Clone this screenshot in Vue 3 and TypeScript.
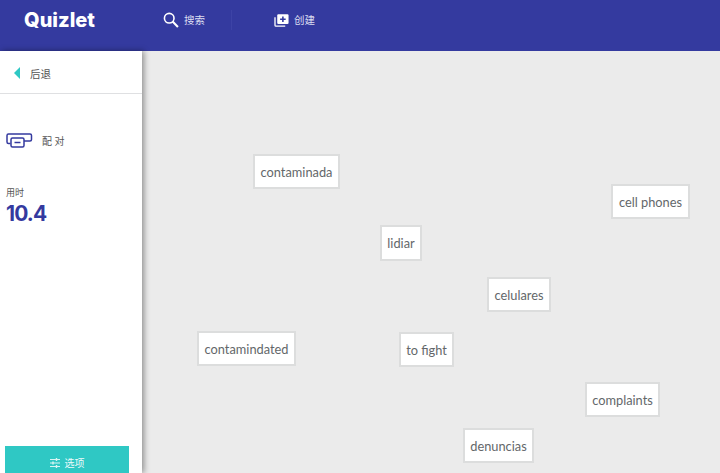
<template>
  <div class="page">
    <!-- 顶部导航 -->
    <header class="topbar">
      <div class="logo">Quizlet</div>
      <nav class="nav">
        <a class="nav-item nav-search">
          <svg class="nav-icon" viewBox="0 0 18 18" width="16" height="16">
            <circle cx="7" cy="7" r="5.4" fill="none" stroke="#fff" stroke-width="1.8" />
            <path d="M10.8 10.8 L16.8 16.8" stroke="#fff" stroke-width="2.4" fill="none" />
          </svg>
          <span>搜索</span>
        </a>
        <span class="nav-sep"></span>
        <a class="nav-item">
          <svg class="nav-icon" viewBox="0 0 16 14" width="15" height="13">
            <path d="M1 3.5 V12 a1 1 0 0 0 1 1 H12" fill="none" stroke="#fff" stroke-width="1.4" />
            <rect x="3.4" y="0.4" width="12.2" height="10.4" rx="1.2" fill="#fff" />
            <path d="M9.5 2.6 V8.6 M6.5 5.6 H12.5" stroke="#343a9f" stroke-width="1.7" />
          </svg>
          <span>创建</span>
        </a>
      </nav>
    </header>

    <div class="body">
      <!-- 侧边栏 -->
      <aside class="sidebar">
        <div class="back">
          <span class="back-arrow"></span>
          <span>后退</span>
        </div>
        <div class="mode">
          <svg viewBox="0 0 27 15" width="27" height="15">
            <path d="M4.5 10.5 H2.5 a1.5 1.5 0 0 1 -1.5 -1.5 V2.5 a1.5 1.5 0 0 1 1.5 -1.5 H24 a1.5 1.5 0 0 1 1.5 1.5 V6.5 a1.5 1.5 0 0 1 -1.5 1.5 H18" fill="none" stroke="#343a9f" stroke-width="1.5" />
            <rect x="5" y="5" width="13" height="9" rx="1.5" fill="#fff" stroke="#343a9f" stroke-width="1.5" />
            <path d="M8.5 9.5 H14.5" stroke="#343a9f" stroke-width="1.5" />
          </svg>
          <span class="mode-label">配 对</span>
        </div>
        <div class="timer">
          <div class="timer-label">用时</div>
          <div class="timer-value">{{ elapsed }}</div>
        </div>
        <button class="options">
          <svg viewBox="0 0 10 10" width="10" height="10">
            <path d="M0 1.5 H10 M0 5 H10 M0 8.5 H10" stroke="#d9f5f3" stroke-width="1.1" />
            <path d="M6.5 0 V3 M3 3.5 V6.5 M6.5 7 V10" stroke="#d9f5f3" stroke-width="1.4" />
          </svg>
          <span>选项</span>
        </button>
      </aside>

      <!-- 配对画布 -->
      <main class="board">
        <div
          v-for="card in cards"
          :key="card.text"
          class="card"
          :style="{ left: card.x + 'px', top: card.y + 'px', width: card.w + 'px', height: card.h + 'px' }"
        >
          {{ card.text }}
        </div>
      </main>
    </div>
  </div>
</template>

<script setup lang="ts">
interface MatchCard {
  text: string
  x: number
  y: number
  w: number
  h: number
}

const elapsed = '10.4'

const cards: MatchCard[] = [
  { text: 'contaminada', x: 111, y: 103, w: 87, h: 35 },
  { text: 'lidiar', x: 238, y: 174, w: 42, h: 36 },
  { text: 'cell phones', x: 469, y: 133, w: 79, h: 35 },
  { text: 'celulares', x: 345, y: 226, w: 64, h: 35 },
  { text: 'contamindated', x: 55, y: 280, w: 99, h: 35 },
  { text: 'to fight', x: 257, y: 281, w: 55, h: 35 },
  { text: 'complaints', x: 443, y: 331, w: 75, h: 35 },
  { text: 'denuncias', x: 321, y: 377, w: 71, h: 35 }
]
</script>

<style scoped>
.page {
  width: 720px;
  height: 473px;
  display: flex;
  flex-direction: column;
  overflow: hidden;
  font-family: "Lato", "Noto Sans CJK SC", sans-serif;
}

.topbar {
  height: 51px;
  flex-shrink: 0;
  display: flex;
  align-items: flex-start;
  background-color: #343a9f;
  color: #fff;
}

.logo {
  width: 163px;
  padding: 8px 0 0 24px;
  box-sizing: border-box;
  font-family: "Inter", sans-serif;
  font-size: 20px;
  line-height: 25px;
  font-weight: 800;
}

.nav {
  display: flex;
  align-items: center;
  padding-top: 10px;
}

.nav-item {
  display: flex;
  align-items: center;
  gap: 5px;
  font-size: 10.5px;
  line-height: 20px;
  color: #dcdef1;
}

.nav-search {
  width: 68px;
}

.nav-sep {
  width: 1px;
  height: 20px;
  margin-right: 42px;
  background-color: #3d43a6;
}

.body {
  flex: 1;
  display: flex;
  min-height: 0;
}

.sidebar {
  width: 142px;
  flex-shrink: 0;
  display: flex;
  flex-direction: column;
  background-color: #fff;
  box-shadow: 2px 0 6px rgba(0, 0, 0, 0.4);
  position: relative;
  z-index: 1;
}

.back {
  height: 43px;
  display: flex;
  align-items: center;
  gap: 10px;
  padding: 2px 0 0 14px;
  box-sizing: border-box;
  border-bottom: 1px solid #dfe0e2;
  font-size: 10.5px;
  color: #555;
}

.back-arrow {
  width: 0;
  height: 0;
  border-top: 6px solid transparent;
  border-bottom: 6px solid transparent;
  border-right: 6px solid #2fc8c4;
}

.mode {
  display: flex;
  align-items: center;
  gap: 9px;
  padding: 39px 0 0 6px;
}

.mode-label {
  font-size: 10px;
  color: #555;
}

.timer {
  padding: 39px 0 0 6px;
}

.timer-label {
  font-size: 9px;
  line-height: 12px;
  color: #555;
}

.timer-value {
  margin-top: 3px;
  font-family: "Inter", sans-serif;
  font-size: 21px;
  line-height: 24px;
  font-weight: 700;
  letter-spacing: -0.9px;
  color: #343a9f;
}

.options {
  margin: auto 0 0 5px;
  width: 124px;
  height: 27px;
  display: flex;
  align-items: center;
  justify-content: center;
  gap: 5px;
  padding: 6px 0 0;
  border: 0;
  background-color: #2fc8c4;
  color: #eefafa;
  font-family: inherit;
  font-size: 10px;
}

.board {
  flex: 1;
  position: relative;
  background-color: #ebebeb;
}

.card {
  position: absolute;
  box-sizing: border-box;
  display: flex;
  align-items: center;
  justify-content: center;
  background-color: #fff;
  border: 2px solid #dcdddd;
  font-size: 12.8px;
  color: #63676a;
  white-space: nowrap;
}
</style>
